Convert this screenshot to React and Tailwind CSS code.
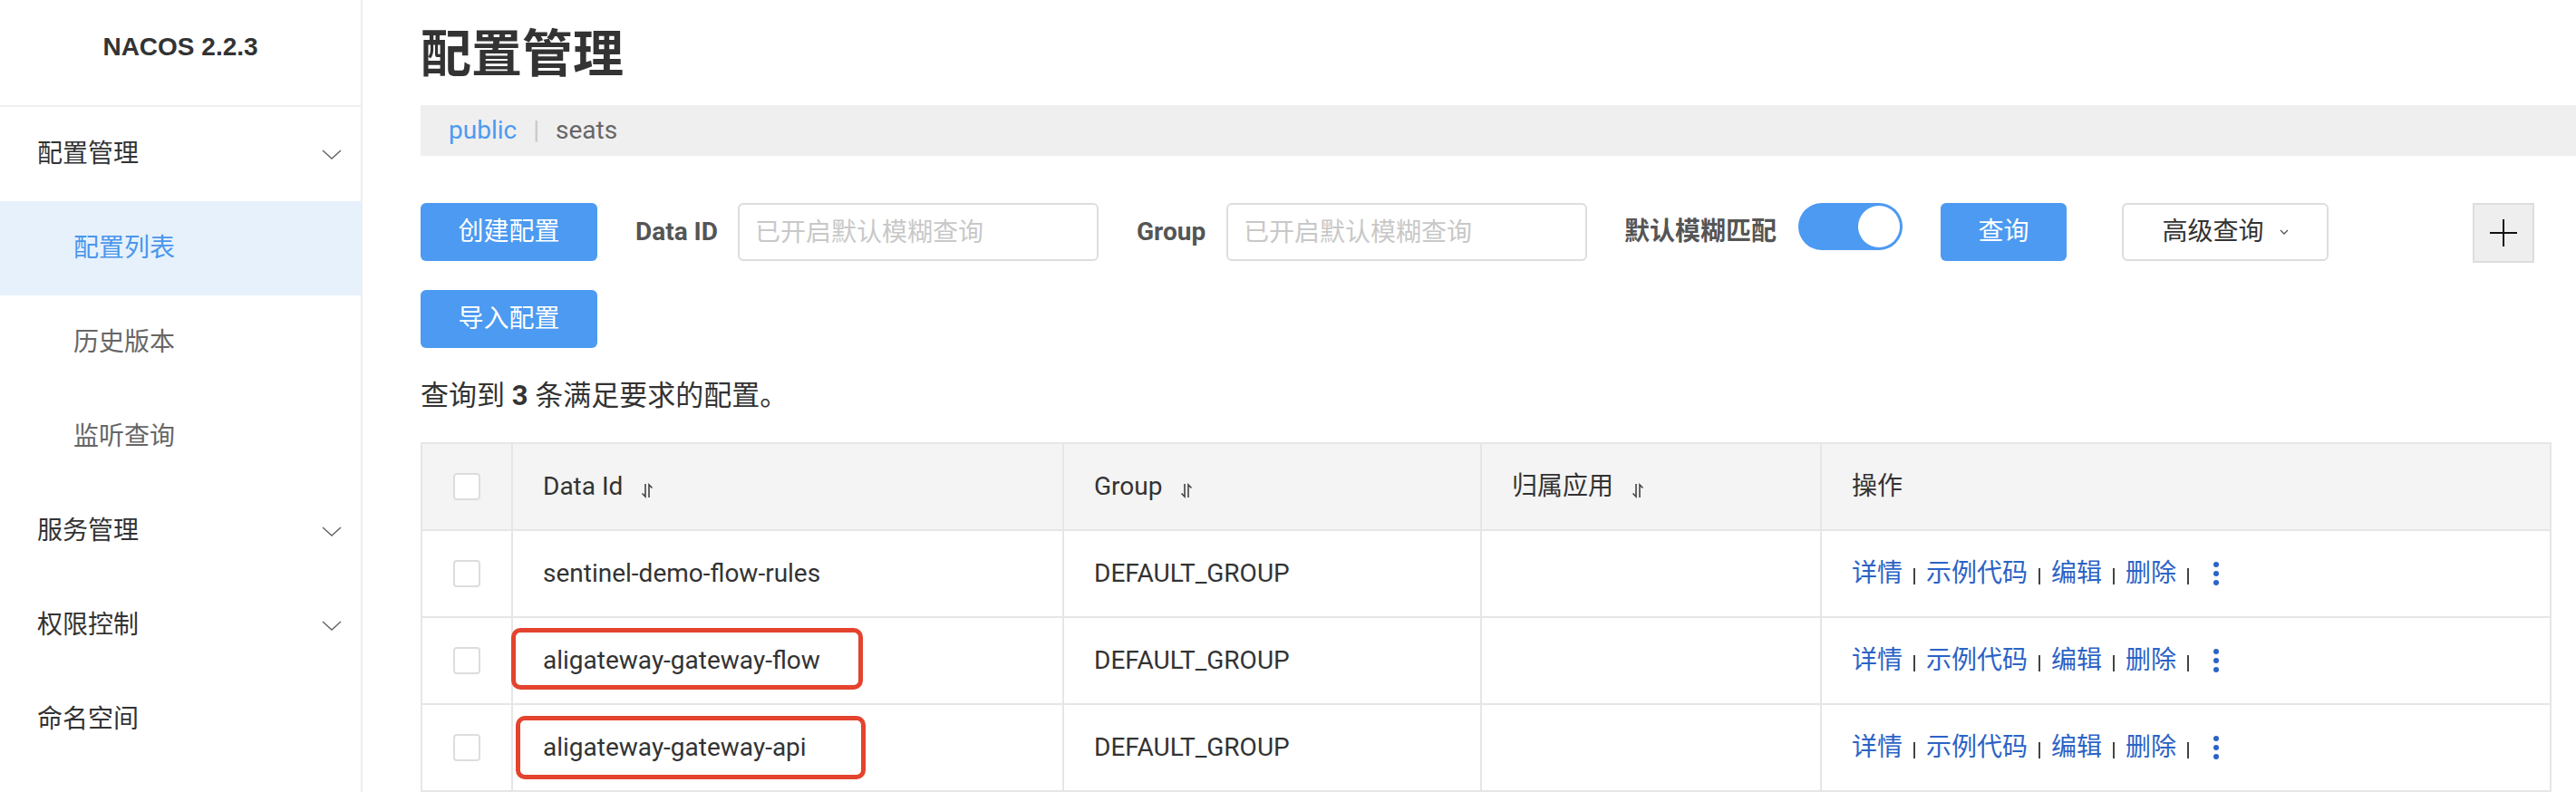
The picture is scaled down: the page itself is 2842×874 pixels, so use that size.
import React from 'react';

const rows = [
    { id: 'sentinel-demo-flow-rules', group: 'DEFAULT_GROUP' },
    { id: 'aligateway-gateway-flow', group: 'DEFAULT_GROUP' },
    { id: 'aligateway-gateway-api', group: 'DEFAULT_GROUP' },
];

export default function App() {
    return (
        <div className="flex h-[874px] w-full overflow-hidden bg-white text-[#333333] font-['Roboto','Noto_Sans_CJK_SC',sans-serif]">
            {/* 侧边栏 */}
            <aside className="w-[400px] shrink-0 border-r-2 border-[#eeeeee]">
                <div className="h-[118px] border-b-2 border-[#eeeeee] pt-[32px] text-center text-[28px] leading-[40px] font-bold text-[#333333] font-['Liberation_Sans',sans-serif]">
                    NACOS 2.2.3
                </div>
                <MenuGroup label="配置管理" />
                <SubItem label="配置列表" active />
                <SubItem label="历史版本" />
                <SubItem label="监听查询" />
                <MenuGroup label="服务管理" />
                <MenuGroup label="权限控制" />
                <MenuGroup label="命名空间" noArrow />
            </aside>

            {/* 内容 */}
            <main className="flex-1 pl-[64px]">
                <h1 className="mt-[32px] text-[56px] leading-[56px] font-bold text-[#333333]">配置管理</h1>

                <div className="mt-[28px] flex h-[56px] items-center bg-[#efefef] pl-[31px] text-[28px]">
                    <span className="text-[#4c9af1]">public</span>
                    <span className="mx-[18px] text-[#c8c8c8]">|</span>
                    <span className="text-[#666666]">seats</span>
                </div>

                <div className="mt-[52px] flex h-[64px] items-center">
                    <BlueButton className="w-[195px]">创建配置</BlueButton>
                    <span className="ml-[42px] w-[87px] whitespace-nowrap text-[28px] font-bold text-[#555555]">Data ID</span>
                    <SearchInput className="ml-[26px]" />
                    <span className="ml-[42px] w-[74px] whitespace-nowrap text-[28px] font-bold text-[#555555]">Group</span>
                    <SearchInput className="ml-[25px]" />
                    <span className="ml-[41px] w-[167px] whitespace-nowrap text-[28px] font-bold text-[#555555]">默认模糊匹配</span>
                    <div className="ml-[25px] flex h-[52px] w-[115px] self-start items-center justify-end rounded-full bg-[#4c9af1] pr-[3px]">
                        <div className="h-[46px] w-[46px] rounded-full bg-white" />
                    </div>
                    <BlueButton className="ml-[42px] w-[139px]">查询</BlueButton>
                    <button className="ml-[61px] flex h-[64px] w-[228px] items-center justify-center gap-[17px] rounded-[6px] border-2 border-[#dddddd] bg-white text-[28px] text-[#333333]">
                        高级查询
                        <svg width="10" height="6" viewBox="0 0 10 6" fill="none">
                            <path d="M1 1 L5 5 L9 1" stroke="#555" strokeWidth="1.3" />
                        </svg>
                    </button>
                    <div className="ml-[159px] flex h-[66px] w-[68px] self-start items-center justify-center border-2 border-[#dddddd] bg-[#eeeeee]">
                        <svg width="30" height="30" viewBox="0 0 30 30">
                            <path d="M15 0 V30 M0 15 H30" stroke="#111" strokeWidth="2" />
                        </svg>
                    </div>
                </div>

                <div className="mt-[32px]">
                    <BlueButton className="w-[195px]">导入配置</BlueButton>
                </div>

                <p className="mt-[33px] text-[31px] leading-[40px] text-[#333333]">
                    查询到 <b className="font-bold">3</b> 条满足要求的配置。
                </p>

                {/* 表格 */}
                <div className="relative mt-[31px] w-[2351px] border-l-2 border-t-2 border-[#e6e6e6] text-[28px]">
                    <div className="grid grid-cols-[100px_608px_461px_375px_1fr]">
                        <div className="flex h-[96px] items-center justify-center border-b-2 border-r-2 border-[#e6e6e6] bg-[#f4f4f4]">
                            <Checkbox />
                        </div>
                        <HeadCell label="Data Id" sort />
                        <HeadCell label="Group" sort />
                        <HeadCell label="归属应用" sort />
                        <HeadCell label="操作" />

                        {rows.map((r) => (
                            <React.Fragment key={r.id}>
                                <div className="flex h-[96px] items-center justify-center border-b-2 border-r-2 border-[#e6e6e6]">
                                    <Checkbox />
                                </div>
                                <Cell>{r.id}</Cell>
                                <Cell>{r.group}</Cell>
                                <Cell />
                                <Cell>
                                    <Actions />
                                </Cell>
                            </React.Fragment>
                        ))}
                    </div>

                    {/* 红框标注 */}
                    <div className="absolute left-[98px] top-[203px] h-[68px] w-[388px] rounded-[10px] border-[5px] border-[#e4432e]" />
                    <div className="absolute left-[103px] top-[300px] h-[70px] w-[386px] rounded-[10px] border-[5px] border-[#e4432e]" />
                </div>
            </main>
        </div>
    );
}

function MenuGroup({ label, noArrow }) {
    return (
        <div className="flex h-[104px] items-center justify-between pl-[41px] pr-[21px] text-[28px] text-[#333333]">
            <span>{label}</span>
            {!noArrow && (
                <svg width="22" height="11" viewBox="0 0 22 11" fill="none">
                    <path d="M1 1 L11 10 L21 1" stroke="#666" strokeWidth="1.5" />
                </svg>
            )}
        </div>
    );
}

function SubItem({ label, active }) {
    return (
        <div className={`flex h-[104px] items-center pl-[81px] text-[28px]
            ${active ? 'bg-[#e6f1fc] text-[#4a96eb]' : 'text-[#666666]'}`}>
            {label}
        </div>
    );
}

function BlueButton({ className, children }) {
    return (
        <button className={`flex h-[64px] items-center justify-center rounded-[6px] bg-[#4c9af1] text-[28px] text-white ${className}`}>
            {children}
        </button>
    );
}

function SearchInput({ className }) {
    return (
        <input
            readOnly
            placeholder="已开启默认模糊查询"
            className={`h-[64px] w-[398px] rounded-[6px] border-2 border-[#dddddd] bg-white pl-[17px] text-[28px] outline-none placeholder:text-[#c8c8c8] ${className}`}
        />
    );
}

function Checkbox() {
    return <div className="h-[30px] w-[30px] rounded-[4px] border-2 border-[#dddddd] bg-white" />;
}

function SortIcon() {
    return (
        <svg width="14" height="17" viewBox="0 0 14 17" fill="none" className="ml-[20px] mt-[8px]">
            <path d="M5 1 V15 L1.5 11.5" stroke="#444" strokeWidth="1.6" />
            <path d="M9 16 V2 L12.5 5.5" stroke="#444" strokeWidth="1.6" />
        </svg>
    );
}

function HeadCell({ label, sort }) {
    return (
        <div className="flex h-[96px] items-center border-b-2 border-r-2 border-[#e6e6e6] bg-[#f4f4f4] pl-[33px] text-[#333333]">
            <span>{label}</span>
            {sort && <SortIcon />}
        </div>
    );
}

function Cell({ children }) {
    return (
        <div className="flex h-[96px] items-center border-b-2 border-r-2 border-[#e6e6e6] pl-[33px] text-[#333333]">
            {children}
        </div>
    );
}

function Sep() {
    return <span className="mx-[12px] mt-[6px] h-[18px] w-[2px] bg-[#444444]" />;
}

function Actions() {
    return (
        <div className="flex items-center text-[#2b63c6]">
            <span>详情</span>
            <Sep />
            <span>示例代码</span>
            <Sep />
            <span>编辑</span>
            <Sep />
            <span>删除</span>
            <Sep />
            <span className="ml-[15px] flex flex-col items-center gap-[4px]">
                <i className="block h-[6px] w-[6px] rounded-full bg-[#2b63c6]" />
                <i className="block h-[6px] w-[6px] rounded-full bg-[#2b63c6]" />
                <i className="block h-[6px] w-[6px] rounded-full bg-[#2b63c6]" />
            </span>
        </div>
    );
}
